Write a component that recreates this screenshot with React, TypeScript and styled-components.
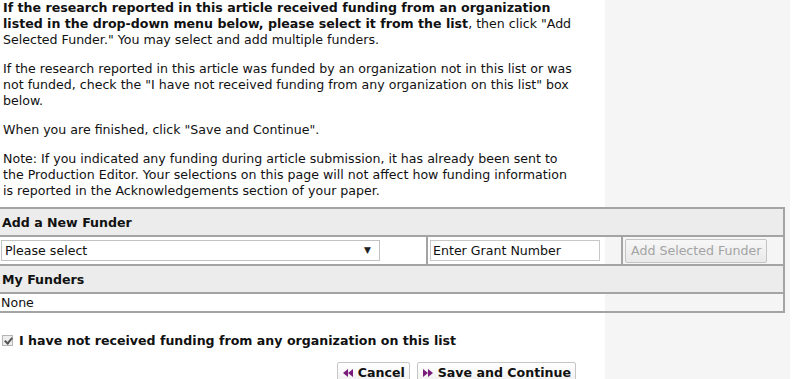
import React from "react";
import styled, { createGlobalStyle } from "styled-components";

const GlobalStyle = createGlobalStyle`
  html, body {
    margin: 0;
    padding: 0;
    background: #fff;
  }
  body {
    font-family: "DejaVu Sans", Verdana, sans-serif;
    font-size: 12.6px;
    color: #111;
  }
`;

const Page = styled.div`
  display: flex;
  width: 800px;
  height: 379px;
  overflow: hidden;
`;

const Main = styled.div`
  position: relative;
  z-index: 1;
  width: 605px;
  flex-shrink: 0;
`;

const Sidebar = styled.div`
  width: 185px;
  background: #f5f5f5;
`;

const Intro = styled.div`
  width: 578px;
  padding-left: 3px;
`;

const Para = styled.p`
  margin: 0 0 13px;
  line-height: 16px;
`;

const FunderTable = styled.table`
  table-layout: fixed;
  width: 786px;
  margin: -5px 0 0 -3px;
  border-collapse: collapse;
`;

const SectionHead = styled.th`
  height: 26px;
  padding: 0 3px;
  text-align: left;
  font-size: 12.6px;
  font-weight: bold;
  background: #ececec;
  border: 2px solid #a4a4a4;
`;

const Cell = styled.td<{ $tall?: boolean }>`
  height: ${(p) => (p.$tall ? "27px" : "17px")};
  padding: 0 0 0 2px;
  vertical-align: middle;
  border: 2px solid #a4a4a4;
  white-space: nowrap;
`;

const SelectWrap = styled.span`
  position: relative;
  display: inline-block;
`;

const FunderSelect = styled.select`
  appearance: none;
  display: block;
  width: 379px;
  height: 21px;
  padding: 0 3px;
  font-family: inherit;
  font-size: 12.6px;
  color: #111;
  background: #fff;
  border: 1px solid #c2c2c2;
  border-radius: 0;
`;

const Arrow = styled.span`
  position: absolute;
  right: 9px;
  top: 5px;
  font-size: 9px;
  color: #222;
  pointer-events: none;
`;

const GrantInput = styled.input`
  display: block;
  width: 170px;
  height: 21px;
  box-sizing: border-box;
  padding: 0 2px;
  font-family: inherit;
  font-size: 12.6px;
  color: #111;
  border: 1px solid #c8c8c8;
`;

const AddButton = styled.button`
  display: block;
  height: 24px;
  padding: 0 5px;
  font-family: inherit;
  font-size: 12.6px;
  color: #a3a3a3;
  background: linear-gradient(#f7f7f7, #e9e9e9);
  border: 1px solid #c4c4c4;
  border-radius: 2px;
`;

const CheckRow = styled.label`
  display: flex;
  align-items: center;
  gap: 6px;
  margin: 20px 0 0 2px;
  font-size: 12.6px;
  font-weight: bold;
`;

const Check = styled.input`
  appearance: none;
  position: relative;
  width: 11px;
  height: 11px;
  margin: 0;
  background: #eeeeee;
  border: 1px solid #b4b4b4;
  &:checked::after {
    content: "";
    position: absolute;
    left: 3px;
    top: 0px;
    width: 3px;
    height: 6px;
    border: solid #555;
    border-width: 0 2px 2px 0;
    transform: rotate(40deg);
  }
`;

const Actions = styled.div`
  display: flex;
  justify-content: flex-end;
  gap: 7px;
  width: 576px;
  margin-top: 14px;
`;

const NavButton = styled.button`
  display: flex;
  align-items: center;
  gap: 5px;
  height: 21px;
  padding: 0 4px 0 5px;
  font-family: inherit;
  font-size: 12.6px;
  font-weight: bold;
  color: #111;
  background: linear-gradient(#ffffff, #f0f0f0);
  border: 1px solid #c6c6c6;
  border-radius: 2px;
`;

function DoubleArrow({ back }: { back?: boolean }) {
  return (
    <svg width="10" height="8" viewBox="0 0 10 8">
      {back ? (
        <>
          <polygon points="5,0 0,4 5,8" fill="#7a1a7a" />
          <polygon points="10,0 5,4 10,8" fill="#7a1a7a" />
        </>
      ) : (
        <>
          <polygon points="0,0 5,4 0,8" fill="#7a1a7a" />
          <polygon points="5,0 10,4 5,8" fill="#7a1a7a" />
        </>
      )}
    </svg>
  );
}

export default function App() {
  return (
    <>
      <GlobalStyle />
      <Page>
        <Main>
          <Intro>
            <Para>
              <b>
                If the research reported in this article received funding from an organization
                listed in the drop-down menu below, please select it from the list
              </b>
              , then click "Add Selected Funder." You may select and add multiple funders.
            </Para>
            <Para>
              If the research reported in this article was funded by an organization not in this
              list or was not funded, check the "I have not received funding from any organization
              on this list" box below.
            </Para>
            <Para>When you are finished, click "Save and Continue".</Para>
            <Para>
              Note: If you indicated any funding during article submission, it has already been
              sent to the Production Editor. Your selections on this page will not affect how
              funding information is reported in the Acknowledgements section of your paper.
            </Para>
          </Intro>

          <FunderTable>
            <colgroup>
              <col style={{ width: 429 }} />
              <col style={{ width: 195 }} />
              <col style={{ width: 162 }} />
            </colgroup>
            <tbody>
              <tr>
                <SectionHead colSpan={3}>Add a New Funder</SectionHead>
              </tr>
              <tr>
                <Cell $tall>
                  <SelectWrap>
                    <FunderSelect defaultValue="">
                      <option value="">Please select</option>
                    </FunderSelect>
                    <Arrow>▼</Arrow>
                  </SelectWrap>
                </Cell>
                <Cell $tall>
                  <GrantInput defaultValue="Enter Grant Number" />
                </Cell>
                <Cell $tall>
                  <AddButton disabled>Add Selected Funder</AddButton>
                </Cell>
              </tr>
              <tr>
                <SectionHead colSpan={3}>My Funders</SectionHead>
              </tr>
              <tr>
                <Cell colSpan={3}>None</Cell>
              </tr>
            </tbody>
          </FunderTable>

          <CheckRow>
            <Check type="checkbox" defaultChecked />
            I have not received funding from any organization on this list
          </CheckRow>

          <Actions>
            <NavButton>
              <DoubleArrow back />
              Cancel
            </NavButton>
            <NavButton>
              <DoubleArrow />
              Save and Continue
            </NavButton>
          </Actions>
        </Main>
        <Sidebar />
      </Page>
    </>
  );
}
